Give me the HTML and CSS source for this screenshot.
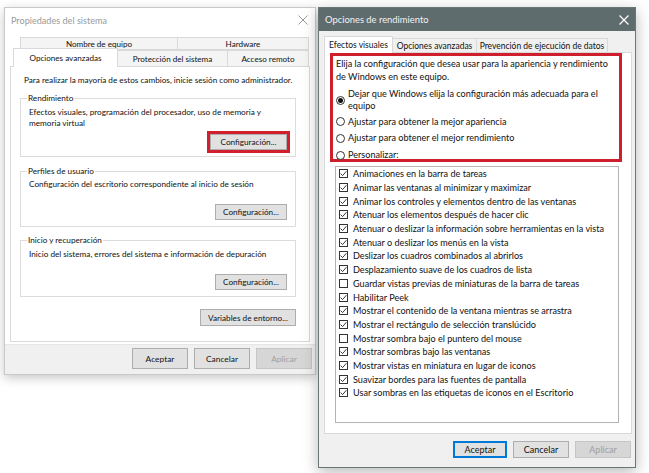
FILE: index.html
```html
<!DOCTYPE html>
<html lang="es">
<head>
<meta charset="utf-8">
<title>Propiedades del sistema</title>
<link rel="stylesheet" href="styles.css">
</head>
<body>
<div class="desk">
  <section class="win sys">
    <header class="titlebar">
      <span class="title">Propiedades del sistema</span>
      <svg class="close" width="10" height="10" viewBox="0 0 10 10"><path d="M0.5 0.5 L9.5 9.5 M9.5 0.5 L0.5 9.5"/></svg>
    </header>
    <div class="sys-body">
      <div class="tabs">
        <div class="tabrow row1">
          <span class="tab t-nombre">Nombre de equipo</span>
          <span class="tab t-hard">Hardware</span>
        </div>
        <div class="tabrow row2">
          <span class="tab sel t-opc">Opciones avanzadas</span>
          <span class="tab t-prot">Protección del sistema</span>
          <span class="tab t-acc">Acceso remoto</span>
        </div>
      </div>
      <div class="panel">
        <p class="intro">Para realizar la mayoría de estos cambios, inicie sesión como administrador.</p>
        <fieldset class="group g1">
          <legend>Rendimiento</legend>
          <p class="gtext">Efectos visuales, programación del procesador, uso de memoria y<br>memoria virtual</p>
          <div class="btnrow"><button class="btn cfg hl">Configuración...</button></div>
        </fieldset>
        <fieldset class="group g2">
          <legend>Perfiles de usuario</legend>
          <p class="gtext">Configuración del escritorio correspondiente al inicio de sesión</p>
          <div class="btnrow"><button class="btn cfg">Configuración...</button></div>
        </fieldset>
        <fieldset class="group g3">
          <legend>Inicio y recuperación</legend>
          <p class="gtext">Inicio del sistema, errores del sistema e información de depuración</p>
          <div class="btnrow"><button class="btn cfg">Configuración...</button></div>
        </fieldset>
        <div class="btnrow envrow"><button class="btn env">Variables de entorno...</button></div>
      </div>
    </div>
    <footer class="foot">
      <button class="btn fbtn b-ok">Aceptar</button>
      <button class="btn fbtn b-cancel">Cancelar</button>
      <button class="btn fbtn b-apply" disabled>Aplicar</button>
    </footer>
  </section>

  <section class="win perf">
    <header class="titlebar dark">
      <span class="title">Opciones de rendimiento</span>
      <svg class="close" width="10" height="10" viewBox="0 0 10 10"><path d="M0.5 0.5 L9.5 9.5 M9.5 0.5 L0.5 9.5"/></svg>
    </header>
    <div class="perf-body">
      <div class="ptabs">
        <span class="ptab sel p-efe">Efectos visuales</span>
        <span class="ptab p-opc">Opciones avanzadas</span>
        <span class="ptab p-prev">Prevención de ejecución de datos</span>
      </div>
      <div class="ppanel">
        <div class="redbox">
          <p class="pintro">Elija la configuración que desea usar para la apariencia y rendimiento<br>de Windows en este equipo.</p>
          <div class="radios">
            <label class="radio r1"><span class="rb on"></span><span class="rtext">Dejar que Windows elija la configuración más adecuada para el<br>equipo</span></label>
            <label class="radio r2"><span class="rb"></span><span class="rtext">Ajustar para obtener la mejor apariencia</span></label>
            <label class="radio r3"><span class="rb"></span><span class="rtext">Ajustar para obtener el mejor rendimiento</span></label>
            <label class="radio r4"><span class="rb"></span><span class="rtext">Personalizar:</span></label>
          </div>
        </div>
        <ul class="list">
          <li><span class="cb on"></span>Animaciones en la barra de tareas</li>
          <li><span class="cb on"></span>Animar las ventanas al minimizar y maximizar</li>
          <li><span class="cb on"></span>Animar los controles y elementos dentro de las ventanas</li>
          <li><span class="cb on"></span>Atenuar los elementos después de hacer clic</li>
          <li><span class="cb on"></span>Atenuar o deslizar la información sobre herramientas en la vista</li>
          <li><span class="cb on"></span>Atenuar o deslizar los menús en la vista</li>
          <li><span class="cb on"></span>Deslizar los cuadros combinados al abrirlos</li>
          <li><span class="cb on"></span>Desplazamiento suave de los cuadros de lista</li>
          <li><span class="cb"></span>Guardar vistas previas de miniaturas de la barra de tareas</li>
          <li><span class="cb on"></span>Habilitar Peek</li>
          <li><span class="cb on"></span>Mostrar el contenido de la ventana mientras se arrastra</li>
          <li><span class="cb on"></span>Mostrar el rectángulo de selección translúcido</li>
          <li><span class="cb"></span>Mostrar sombra bajo el puntero del mouse</li>
          <li><span class="cb on"></span>Mostrar sombras bajo las ventanas</li>
          <li><span class="cb on"></span>Mostrar vistas en miniatura en lugar de iconos</li>
          <li><span class="cb on"></span>Suavizar bordes para las fuentes de pantalla</li>
          <li><span class="cb on"></span>Usar sombras en las etiquetas de iconos en el Escritorio</li>
        </ul>
      </div>
      <div class="pfoot">
        <button class="btn pbtn focus w54">Aceptar</button>
        <button class="btn pbtn">Cancelar</button>
        <button class="btn pbtn" disabled>Aplicar</button>
      </div>
    </div>
  </section>
</div>
</body>
</html>
```
FILE: styles.css
```css
* { box-sizing: border-box; }
html, body { margin: 0; padding: 0; background: #fff; }
body {
  font-family: Lato, "Noto Sans", sans-serif;
  color: #111;
  width: 649px; height: 473px; overflow: hidden;
}
p { margin: 0; }

.desk {
  display: flex;
  align-items: flex-start;
  gap: 2px;
  padding: 7px 0 0 4px;
}

.win { display: flex; flex-direction: column; }

/* ---------- Left window ---------- */
.sys {
  width: 312px;
  height: 368px;
  border: 1px solid #c9c9c9;
  background: #fff;
  box-shadow: 0 3px 10px rgba(0,0,0,0.22);
  font-size: 8.2px;
}
.titlebar {
  display: flex;
  align-items: center;
  justify-content: space-between;
  height: 24px;
  padding: 0 7px 0 6px;
  color: #9a9a9a;
  font-size: 9.1px;
}
.titlebar .close path { stroke: #9a9a9a; stroke-width: 1; fill: none; }

.sys-body { padding: 5px 5px 2px 5px; }
.tabrow { display: flex; align-items: flex-end; }
.row1 { height: 13px; padding-left: 10px; }
.row2 { height: 16px; padding-left: 3px; }
.tab {
  display: flex;
  align-items: center;
  justify-content: center;
  height: 100%;
  border: 1px solid #d9d9d9;
  border-bottom: none;
  background: #f4f4f4;
  font-size: 8.1px;
  white-space: nowrap;
}
.tab + .tab { margin-left: -1px; }
.t-nombre { width: 158px; }
.t-hard { width: 132px; }
.t-opc { width: 105px; }
.t-prot { width: 111px; }
.t-acc { width: 82px; }
.row1 .tab { border-bottom: 1px solid #d9d9d9; }
.tab.sel {
  position: relative;
  z-index: 1;
  height: 19px;
  margin-top: -2px;
  margin-bottom: -1px;
  padding-bottom: 1px;
  background: #fff;
}
.panel {
  height: 276px;
  border: 1px solid #d9d9d9;
  background: #fff;
  padding: 8px 13px 0 9px;
}
.intro { line-height: 11px; padding-left: 4px; white-space: nowrap; }
.group {
  margin: 0;
  padding: 0 8px 6px 8px;
  border: 1px solid #dcdcdc;
  min-width: 0;
}
.group legend {
  padding: 0 1px;
  margin-left: -2px;
  line-height: 11px;
}
.gtext { line-height: 11px; white-space: nowrap; }
.g1 { margin-top: 7px; }
.g1 .gtext { margin-top: 3px; }
.g1 .btnrow { margin-top: 5px; }
.g2 { margin-top: 9px; }
.g2 .gtext { margin-top: 2px; }
.g2 .btnrow, .g3 .btnrow { margin-top: 14px; }
.g3 { margin-top: 8px; }
.g3 .gtext { margin-top: 3px; }
.btnrow { display: flex; justify-content: flex-end; }
.envrow { margin-top: 12px; }

.btn {
  font-family: inherit;
  font-size: 8.2px;
  color: #111;
  background: #e1e1e1;
  border: 1px solid #adadad;
  padding: 0;
  margin: 0;
  border-radius: 0;
}
.btn:disabled { background: #d6d6d6; border-color: #c6c6c6; color: #a0a0a0; }
.cfg { width: 72px; height: 16px; }
.cfg.hl { width: 77px; outline: 3px solid #d11f2e; outline-offset: 0; }
.env { width: 96px; height: 17px; }

.foot {
  flex: 1;
  display: flex;
  justify-content: flex-end;
  gap: 6px;
  padding: 3px 3px 0 0;
  background: #f0f0f0;
  border-top: 1px solid #e6e6e6;
}
.fbtn { width: 56px; height: 21px; font-size: 8.4px; }

/* ---------- Right window ---------- */
.perf {
  width: 318px;
  height: 461px;
  border: 1px solid #6a7577;
  background: #f0f0f0;
  box-shadow: 0 4px 14px rgba(0,0,0,0.28);
  font-size: 9.1px;
}
.titlebar.dark {
  height: 23px;
  background: #5f6c6e;
  color: #f2f2f2;
  font-size: 9.4px;
  padding: 0 6px 0 6px;
}
.titlebar.dark .close path { stroke: #fff; stroke-width: 1.2; }

.perf-body { padding: 5px 3px 0 5px; }
.ptabs { display: flex; align-items: flex-end; height: 16px; }
.ptab {
  display: flex;
  align-items: center;
  justify-content: center;
  height: 14px;
  border: 1px solid #d9d9d9;
  border-bottom: none;
  background: #f0f0f0;
  font-size: 8.5px;
  white-space: nowrap;
}
.ptab + .ptab { margin-left: -1px; }
.ptab.sel {
  position: relative;
  z-index: 1;
  height: 17px;
  margin-bottom: -1px;
  background: #fff;
}
.p-efe { width: 69px; }
.p-opc { width: 85px; }
.p-prev { width: 132px; }

.ppanel {
  height: 382px;
  border: 1px solid #d9d9d9;
  background: #fff;
}
.redbox {
  width: 292px;
  height: 109px;
  margin-left: 5px;
  border: 3px solid #cf1f2d;
  padding: 1px 4px 0 3px;
}
.pintro { line-height: 13.4px; white-space: nowrap; }
.radios { margin-top: 4px; display: flex; flex-direction: column; }
.radio {
  display: flex;
  align-items: center;
  gap: 3px;
  line-height: 12.4px;
  white-space: nowrap;
}
.r2 { margin-top: 3px; }
.r3, .r4 { margin-top: 4.3px; }
.rb {
  flex: none;
  width: 9px;
  height: 9px;
  border: 1px solid #333;
  border-radius: 50%;
  background: #fff;
  display: flex;
  align-items: center;
  justify-content: center;
}
.rb.on::after {
  content: "";
  width: 5px;
  height: 5px;
  border-radius: 50%;
  background: #111;
}

.list {
  list-style: none;
  margin: 4px 0 0 10px;
  padding: 0 0 0 3px;
  width: 284px;
  height: 257px;
  border: 1px solid #b4b4b4;
}
.list li {
  display: flex;
  align-items: center;
  gap: 5px;
  height: 13.7px;
  white-space: nowrap;
}
.cb {
  flex: none;
  width: 9px;
  height: 9px;
  border: 1px solid #333;
  background: #fff no-repeat center;
}
.cb.on {
  background-image: url("data:image/svg+xml;utf8,<svg xmlns='http://www.w3.org/2000/svg' width='7' height='7' viewBox='0 0 7 7'><path d='M0.6 3.6 L2.6 5.6 L6.4 1.2' fill='none' stroke='%23222' stroke-width='0.9'/></svg>");
}

.pfoot {
  display: flex;
  justify-content: flex-end;
  gap: 6px;
  margin-top: 7px;
  padding-right: 1px;
}
.pbtn { width: 56px; height: 17px; font-size: 9px; }
.pbtn.w54 { width: 54px; }
.pbtn.focus { border-color: #0078d7; box-shadow: inset 0 0 0 1px #0078d7; }
```
